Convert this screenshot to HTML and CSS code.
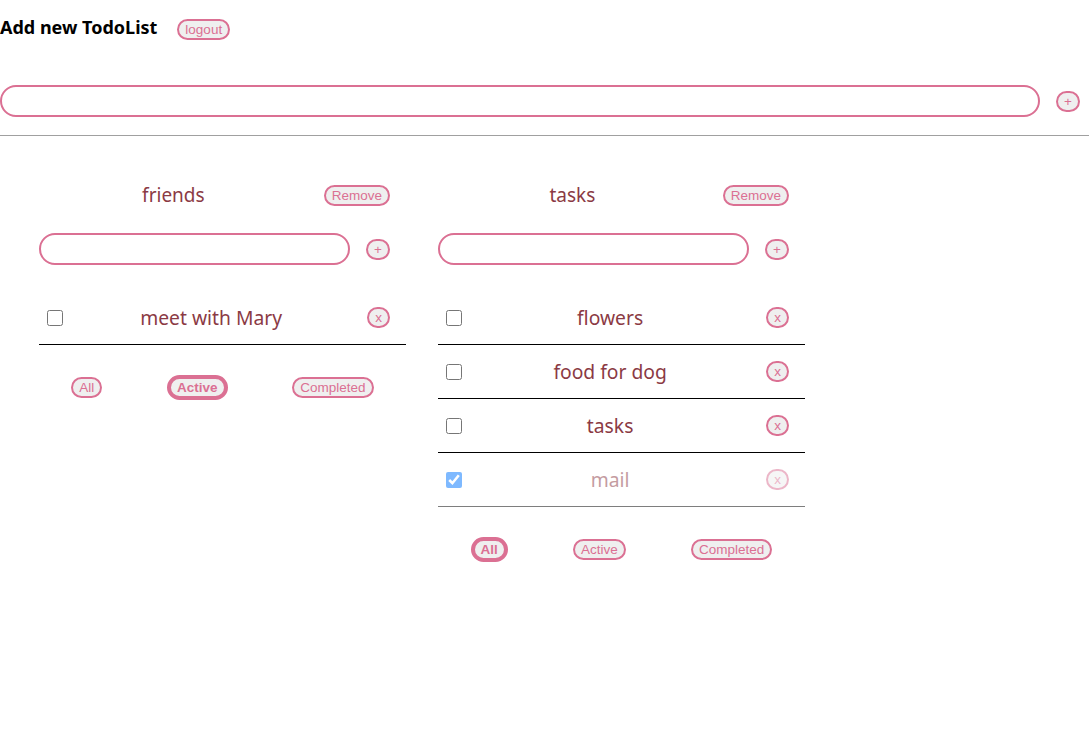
FILE: index.html
```html
<!DOCTYPE html>
<html>
<head>
<meta charset="utf-8">
<link rel="stylesheet" href="styles.css">
</head>
<body>
<div class="top">
  <h3 class="heading">Add new TodoList</h3>
  <button class="btn logout">logout</button>
</div>
<div class="add-row main-add">
  <input class="field" type="text">
  <button class="btn">+</button>
</div>
<hr class="divider">
<div class="lists">
  <div class="list">
    <div class="list-head">
      <h3 class="list-title">friends</h3>
      <button class="btn">Remove</button>
    </div>
    <div class="add-row list-add">
      <input class="field" type="text">
      <button class="btn">+</button>
    </div>
    <ul class="items">
      <li class="item"><input type="checkbox" class="check"><span class="item-text">meet with Mary</span><button class="btn">x</button></li>
    </ul>
    <div class="filters">
      <button class="btn">All</button>
      <button class="btn active">Active</button>
      <button class="btn">Completed</button>
    </div>
  </div>
  <div class="list">
    <div class="list-head">
      <h3 class="list-title">tasks</h3>
      <button class="btn">Remove</button>
    </div>
    <div class="add-row list-add">
      <input class="field" type="text">
      <button class="btn">+</button>
    </div>
    <ul class="items">
      <li class="item"><input type="checkbox" class="check"><span class="item-text">flowers</span><button class="btn">x</button></li>
      <li class="item"><input type="checkbox" class="check"><span class="item-text">food for dog</span><button class="btn">x</button></li>
      <li class="item"><input type="checkbox" class="check"><span class="item-text">tasks</span><button class="btn">x</button></li>
      <li class="item done"><input type="checkbox" class="check" checked><span class="item-text">mail</span><button class="btn">x</button></li>
    </ul>
    <div class="filters">
      <button class="btn active">All</button>
      <button class="btn">Active</button>
      <button class="btn">Completed</button>
    </div>
  </div>
</div>
</body>
</html>
```
FILE: styles.css
```css
* { box-sizing: border-box; }
body {
  margin: 0;
  font-family: "Noto Sans", "Open Sans", sans-serif;
  background: #fff;
}
.top {
  display: flex;
  align-items: flex-start;
  gap: 20px;
  padding-top: 15px;
  height: 41px;
}
.heading {
  margin: 0;
  font-size: 18px;
  line-height: 24px;
  font-weight: 700;
  color: #000;
}
.btn {
  font-family: "Liberation Sans", Arial, sans-serif;
  font-size: 13.5px;
  line-height: 15px;
  color: #db7093;
  background: #efefef;
  border: 2px solid #db7093;
  border-radius: 11px;
  padding: 1px 6px;
  margin: 0;
  cursor: pointer;
}
.btn.logout {
  margin-top: 4px;
}
.btn.active {
  border-width: 4px;
  font-weight: 700;
  padding: 1px 6px;
  border-radius: 13px;
}
.add-row {
  display: flex;
  align-items: center;
  gap: 16px;
}
.main-add {
  margin-top: 44px;
  padding-right: 9px;
}
.field {
  flex: 1;
  height: 32px;
  border: 2px solid #db7093;
  border-radius: 16px;
  padding: 0 12px;
  font-size: 16px;
  outline: none;
  background: #fff;
}
.divider {
  border: none;
  border-top: 1px solid #a0a0a0;
  height: 0;
  margin: 18px 0 0;
}
.lists {
  display: flex;
  gap: 32px;
  padding-left: 39px;
  margin-top: 45px;
  align-items: flex-start;
}
.list {
  width: 367px;
}
.list-head {
  display: flex;
  align-items: center;
  gap: 16px;
  padding-right: 16px;
  height: 28px;
}
.list-title {
  flex: 1;
  margin: 0;
  text-align: center;
  font-size: 19px;
  font-weight: 400;
  line-height: 28px;
  color: #8b3a44;
}
.list-add {
  margin-top: 24px;
  padding-right: 16px;
}
.items {
  list-style: none;
  margin: 26px 0 0;
  padding: 0;
}
.item {
  display: flex;
  align-items: center;
  height: 54px;
  border-bottom: 1px solid #000;
  padding: 0 16px 0 8px;
}
.item.done { opacity: 0.5; }
.check {
  width: 16px;
  height: 16px;
  margin: 0;
}
.item-text {
  flex: 1;
  text-align: center;
  margin-right: 8px;
  font-size: 19.3px;
  color: #8b3a44;
}
.filters {
  display: flex;
  justify-content: space-around;
  align-items: center;
  height: 28px;
  margin-top: 28px;
}
```
